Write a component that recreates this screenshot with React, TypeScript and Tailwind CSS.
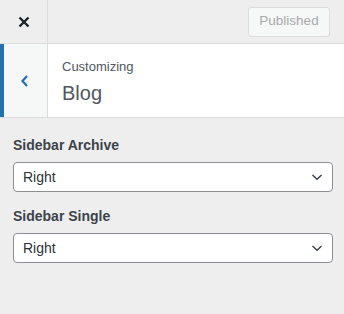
import React from "react";

const font = { fontFamily: '"Liberation Sans", Arial, sans-serif' };

function Chevron() {
  return (
    <svg width="14" height="14" viewBox="0 0 14 14" className="text-[#3c434a]">
      <path d="M2.5 5 L7 9.2 L11.5 5" fill="none" stroke="currentColor" strokeWidth="1.5" />
    </svg>
  );
}

function SelectField({ label }: { label: string }) {
  return (
    <div className="flex flex-col">
      <div className="text-[14px] font-semibold text-[#3c434a] leading-[18px] mb-[8px]">{label}</div>
      <div className="h-[30px] w-[320px] bg-white border border-[#8c8f94] rounded-[4px] flex items-center justify-between pl-[9px] pr-[8px]">
        <span className="text-[14px] text-[#2c3338]">Right</span>
        <Chevron />
      </div>
    </div>
  );
}

export default function App() {
  return (
    <div className="w-[344px] h-[314px] bg-[#eeeeee] flex flex-col" style={font}>
      <div className="h-[44px] flex border-b border-[#dcdcde] shrink-0">
        <div className="w-[48px] flex items-center justify-center border-r border-[#dcdcde]">
          <svg width="12" height="12" viewBox="0 0 12 12">
            <path d="M1.5 1.5 L10.5 10.5 M10.5 1.5 L1.5 10.5" stroke="#1d2327" strokeWidth="2.4" />
          </svg>
        </div>
        <div className="flex-1 flex items-center justify-end pr-[14px]">
          <div className="h-[30px] w-[82px] border border-[#dcdcde] rounded-[3px] bg-[#f6f7f7] flex items-center justify-center text-[13.5px] text-[#a7aaad]">
            Published
          </div>
        </div>
      </div>
      <div className="h-[74px] flex bg-white border-b border-[#dcdcde] shrink-0">
        <div className="w-[48px] bg-[#f6f7f7] border-l-[4px] border-[#2271b1] border-r border-r-[#dcdcde] flex items-center justify-center">
          <svg width="12" height="14" viewBox="0 0 12 14" className="-ml-[2px]">
            <path d="M8 2 L3.5 7 L8 12" fill="none" stroke="#2271b1" strokeWidth="2.2" />
          </svg>
        </div>
        <div className="flex flex-col justify-center pl-[14px] pt-[3px]">
          <div className="text-[13px] text-[#50575e] leading-[16px]">Customizing</div>
          <div className="text-[20px] text-[#50575e] leading-[26px] mt-[5px]">Blog</div>
        </div>
      </div>
      <div className="flex flex-col gap-[15px] px-[13px] pt-[18px]">
        <SelectField label="Sidebar Archive" />
        <SelectField label="Sidebar Single" />
      </div>
    </div>
  );
}
